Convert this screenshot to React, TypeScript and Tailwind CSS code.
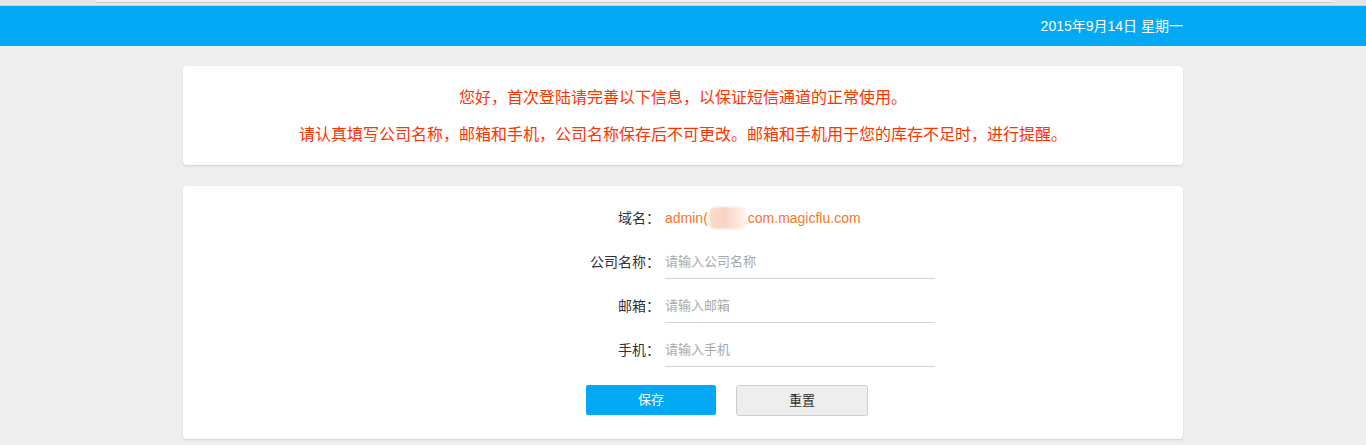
import React from "react";

const font = { fontFamily: '"Liberation Sans", "Noto Sans CJK SC", Arial, sans-serif' };

function Row({ label, children }: { label: string; children: React.ReactNode }) {
  return (
    <div className="flex h-[44px] items-center">
      <div className="w-[477px] text-right text-[14px] text-[#333]">{label}</div>
      <div className="ml-[5px]">{children}</div>
    </div>
  );
}

function Field({ placeholder }: { placeholder: string }) {
  return (
    <input
      placeholder={placeholder}
      className="h-[33px] w-[270px] border-b border-[#d4d4d4] bg-transparent text-[13px] text-[#333] outline-none placeholder:text-[#a9a9a9]"
      style={font}
    />
  );
}

export default function App() {
  return (
    <div className="min-h-[445px] bg-[#eeeeee]" style={font}>
      <div className="h-[6px] bg-[#e6e6e6] border-b border-[#cfcfcf]">
        <div className="ml-[96px] h-[3px] w-[1237px] bg-[#f2f2f2] border-b border-[#c9c9c9]" />
      </div>
      <div className="h-[40px] bg-[#03a9f4]">
        <div className="mx-auto flex h-full w-[1000px] items-center justify-end text-[14px] text-white">
          2015年9月14日 星期一
        </div>
      </div>
      <div className="mx-auto w-[1000px] pt-[20px]">
        <div className="rounded-[4px] bg-white pt-[13px] pb-[12px] text-center text-[16px] leading-[37px] text-[#ff3300] shadow-[0_1px_2px_rgba(0,0,0,0.12)]">
          <p>您好，首次登陆请完善以下信息，以保证短信通道的正常使用。</p>
          <p>请认真填写公司名称，邮箱和手机，公司名称保存后不可更改。邮箱和手机用于您的库存不足时，进行提醒。</p>
        </div>
        <div className="mt-[21px] rounded-[4px] bg-white pt-[10px] pb-[23px] shadow-[0_1px_2px_rgba(0,0,0,0.12)]">
          <Row label="域名：">
            <div className="flex items-center text-[14px] text-[#f7772c]">
              <span>admin(</span>
              <span className="mx-[1px] inline-block h-[22px] w-[38px] rounded-[6px] bg-[linear-gradient(90deg,#fcdccc_0%,#f9d3c2_40%,#fde6dc_75%,#fff4ef_100%)] blur-[1px]" />
              <span>com.magicflu.com</span>
            </div>
          </Row>
          <Row label="公司名称：">
            <Field placeholder="请输入公司名称" />
          </Row>
          <Row label="邮箱：">
            <Field placeholder="请输入邮箱" />
          </Row>
          <Row label="手机：">
            <Field placeholder="请输入手机" />
          </Row>
          <div className="mt-[13px] flex items-start gap-[20px] pl-[403px]">
            <button className="h-[30px] w-[130px] rounded-[2px] bg-[#03a9f4] text-[13px] text-white">保存</button>
            <button className="h-[31px] w-[132px] rounded-[3px] border border-[#cccccc] bg-[#eeeeee] text-[13px] text-[#333]">重置</button>
          </div>
        </div>
      </div>
    </div>
  );
}
